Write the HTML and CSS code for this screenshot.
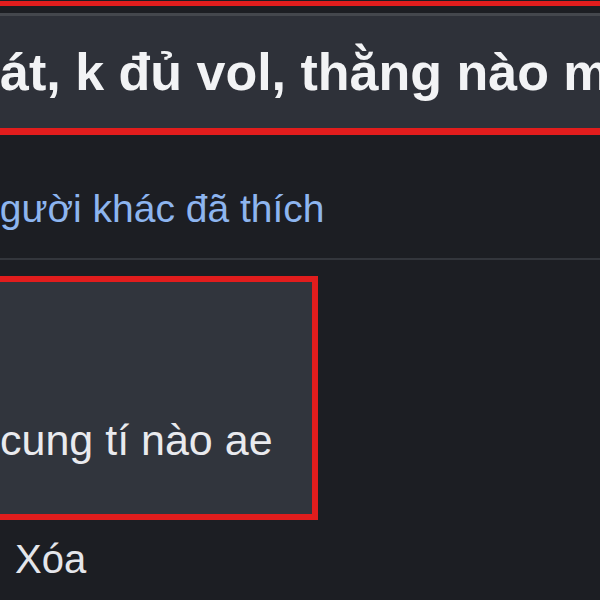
FILE: index.html
```html
<!DOCTYPE html>
<html lang="vi">

<head>
  <meta charset="UTF-8">
  <meta name="viewport" content="width=device-width, initial-scale=1.0">
  <title>Bình luận</title>
  <link rel="stylesheet" href="styles.css">
</head>

<body>
  <div class="mark-line"></div>

  <div class="post-text">
    <p>át, k đủ vol, thằng nào mời</p>
  </div>

  <div class="likes">
    <a href="#">người khác đã thích</a>
  </div>

  <div class="comment-row">
    <div class="comment-bubble">
      <p>cung tí nào ae</p>
    </div>
  </div>

  <div class="comment-actions">
    <span>Xóa</span>
  </div>
</body>

</html>
```

FILE: styles.css
```css
body {
  font-family: 'Liberation Sans', Arial, sans-serif;
  background-color: #1c1e23;
  color: #e4e6eb;
  margin: 0;
  padding: 0;
  width: 600px;
  height: 600px;
  overflow: hidden;
}

p {
  margin: 0;
}

/* viền đỏ của khung phía trên */
.mark-line {
  height: 5px;
  margin-top: 1px;
  background-color: #e11d1d;
}

.post-text {
  margin-top: 7px;
  border-top: 3px solid #44474d;
  border-bottom: 7px solid #e11d1d;
  background-color: #2e3139;
  padding: 27px 0;
  white-space: nowrap;
  overflow: hidden;
}

.post-text p {
  font-size: 52px;
  font-weight: bold;
  line-height: 58px;
  color: #f2f3f5;
}

.likes {
  margin-top: 51px;
  padding-bottom: 26px;
  border-bottom: 2px solid #33363c;
  white-space: nowrap;
  overflow: hidden;
}

.likes a {
  display: block;
  margin-left: -22px;
  font-size: 39px;
  line-height: 46px;
  color: #8db5ef;
  text-decoration: none;
}

.comment-row {
  margin-top: 16px;
  display: flex;
}

.comment-bubble {
  margin-left: -30px;
  width: 348px;
  border: 6px solid #e11d1d;
  background-color: #31353d;
  padding: 133px 0 49px 24px;
  box-sizing: border-box;
  white-space: nowrap;
  overflow: hidden;
}

.comment-bubble p {
  font-size: 43px;
  line-height: 50px;
  color: #e9eaee;
}

.comment-actions {
  margin-top: 16px;
  padding-left: 15px;
  font-size: 40px;
  line-height: 46px;
  color: #e4e6eb;
}
```
